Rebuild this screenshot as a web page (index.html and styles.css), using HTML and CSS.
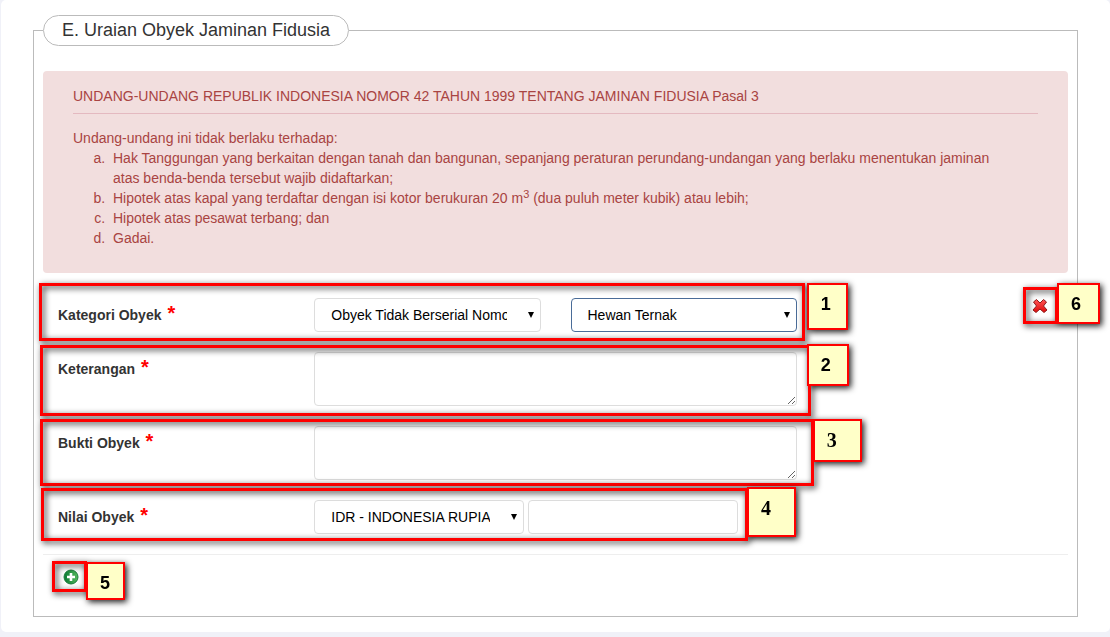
FILE: index.html
```
<!DOCTYPE html>
<html lang="id">
<head>
    <meta charset="UTF-8">
    <meta name="viewport" content="width=device-width, initial-scale=1.0">
    <title>Uraian Obyek Jaminan Fidusia</title>
    <link rel="stylesheet" href="styles.css">
</head>
<body>
    <form class="panel">
        <fieldset class="section">
            <legend>E. Uraian Obyek Jaminan Fidusia</legend>

            <div class="alert">
                <p class="alert-title">UNDANG-UNDANG REPUBLIK INDONESIA NOMOR 42 TAHUN 1999 TENTANG JAMINAN FIDUSIA Pasal 3</p>
                <p>Undang-undang ini tidak berlaku terhadap:</p>
                <ol>
                    <li>Hak Tanggungan yang berkaitan dengan tanah dan bangunan, sepanjang peraturan perundang-undangan yang berlaku menentukan jaminan atas benda-benda tersebut wajib didaftarkan;</li>
                    <li>Hipotek atas kapal yang terdaftar dengan isi kotor berukuran 20 m<sup>3</sup> (dua puluh meter kubik) atau lebih;</li>
                    <li>Hipotek atas pesawat terbang; dan</li>
                    <li>Gadai.</li>
                </ol>
            </div>

            <div class="rows">
                <div class="row">
                    <div class="fields">
                        <label for="kategori">Kategori Obyek <span class="req">*</span></label>
                        <div class="control">
                            <span class="select">
                                <select id="kategori">
                                    <option>Obyek Tidak Berserial Nomor</option>
                                </select>
                            </span>
                        </div>
                        <div class="control">
                            <span class="select active">
                                <select id="jenis" aria-label="Jenis Obyek">
                                    <option>Hewan Ternak</option>
                                </select>
                            </span>
                        </div>
                        <div class="frame frame-1"><span class="note">1</span></div>
                    </div>
                    <div class="remove">
                        <button type="button" class="icon-button" aria-label="Hapus">
                            <svg width="16" height="16" viewBox="0 0 16 16">
                                <defs>
                                    <linearGradient id="red" x1="0" y1="0" x2="0" y2="1">
                                        <stop offset="0" stop-color="#f55"/>
                                        <stop offset="1" stop-color="#e00a0a"/>
                                    </linearGradient>
                                </defs>
                                <path d="M4.500 1.500 8 5l3.500-3.500 3 2.500L11.500 8l3.500 4-3 2.500L8 11l-4 3.500L1 12l3.500-4L1.500 4z" fill="url(#red)" stroke="#8f1a1a" stroke-linejoin="round"/>
                            </svg>
                        </button>
                        <div class="frame frame-6"><span class="note">6</span></div>
                    </div>
                </div>

                <div class="row">
                    <div class="fields">
                        <label for="keterangan">Keterangan <span class="req">*</span></label>
                        <div class="control wide"><textarea id="keterangan"></textarea></div>
                        <div class="frame frame-2"><span class="note">2</span></div>
                    </div>
                </div>

                <div class="row">
                    <div class="fields">
                        <label for="bukti">Bukti Obyek <span class="req">*</span></label>
                        <div class="control wide"><textarea id="bukti"></textarea></div>
                        <div class="frame frame-3"><span class="note serif">3</span></div>
                    </div>
                </div>

                <div class="row">
                    <div class="fields">
                        <label for="nilai">Nilai Obyek <span class="req">*</span></label>
                        <div class="control wide money">
                            <span class="select">
                                <select id="mata-uang" aria-label="Mata Uang">
                                    <option>IDR - INDONESIA RUPIAH</option>
                                </select>
                            </span>
                            <input type="text" id="nilai">
                        </div>
                        <div class="frame frame-4"><span class="note serif">4</span></div>
                    </div>
                </div>
            </div>

            <div class="add">
                <button type="button" class="icon-button" aria-label="Tambah">
                    <svg width="16" height="16" viewBox="0 0 16 16">
                        <defs>
                            <linearGradient id="green" x1="0" y1="0" x2="1" y2="0">
                                <stop offset="0" stop-color="#087a32"/>
                                <stop offset="1" stop-color="#55b85c"/>
                            </linearGradient>
                        </defs>
                        <circle cx="8" cy="8" r="7" fill="url(#green)" stroke="#1d7c3c"/>
                        <path d="M8 4v8M4 8h8" stroke="#fff" stroke-width="2.600"/>
                    </svg>
                </button>
                <div class="frame frame-5"><span class="note">5</span></div>
            </div>
        </fieldset>
    </form>
</body>
</html>
```
FILE: styles.css
```
* {
    box-sizing: border-box;
}
body {
    margin: 0;
    background: #f0f1f8;
    color: #333;
    font: 14px/20px "Liberation Sans", Arial, sans-serif;
}
.panel {
    margin: 0 0 5px 1px;
    padding: 15px 32px;
    background: #fff;
    border-radius: 5px;
}
.section {
    min-width: 0;
    margin: 0;
    padding: 25px 9px 31px;
    border: 1px solid #bbb;
}
legend {
    padding: 0 18px;
    border: 1px solid #bbb;
    border-radius: 16px;
    font-size: 18px;
    line-height: 29px;
}

.alert {
    padding: 15px 30px 25px;
    background: #f2dede;
    border-radius: 4px;
    color: #a94442;
}
.alert p {
    margin: 0;
}
.alert .alert-title {
    margin-bottom: 14px;
    padding-bottom: 7px;
    border-bottom: 1px solid #e4b9c0;
}
.alert ol {
    margin: 0;
    padding: 0 20px 0 40px;
}
.alert li::marker {
    content: counter(list-item, lower-alpha) ".\00a0\00a0";
}
.alert sup {
    position: relative;
    top: -5px;
    font-size: 11px;
    line-height: 0;
    vertical-align: baseline;
}

.rows {
    display: flex;
    flex-direction: column;
    gap: 20px;
    padding: 25px 0 20px;
    border-bottom: 1px solid #eee;
}
.row {
    display: grid;
    grid-template-columns: 3fr 1fr;
}
.fields {
    position: relative;
    display: grid;
    grid-template-columns: repeat(3, 1fr);
}
label {
    padding: 7px 15px 0;
    font-weight: bold;
}
.req {
    margin-left: 2px;
    color: #f00;
    font-size: 20px;
    line-height: 0;
}
.control {
    display: flex;
    padding: 0 15px;
}
.wide {
    grid-column: span 2;
}
.money {
    gap: 4px;
}
.money .select, .money input {
    flex: 0 1 210px;
}
.select {
    position: relative;
    flex: 1;
    min-width: 0;
}
.select::after {
    content: "";
    position: absolute;
    top: 14px;
    right: 7px;
    border: 3px solid transparent;
    border-top: 6px solid #000;
    border-bottom: 0;
    pointer-events: none;
}
select, input, textarea {
    width: 100%;
    min-width: 0;
    height: 34px;
    border: 1px solid #ddd;
    border-radius: 4px;
    background: #fff;
    color: #000;
    font: inherit;
}
select {
    appearance: none;
    padding: 0 33px 0 16px;
}
.active select {
    border-color: #4a6c98;
}
textarea {
    display: block;
    height: 54px;
    resize: vertical;
}

.remove {
    position: relative;
    justify-self: end;
    align-self: start;
    margin-right: 20px;
}
.add {
    position: relative;
    width: 16px;
    margin: 14px 0 0 20px;
}
.icon-button {
    display: block;
    padding: 0;
    border: 0;
    background: none;
    cursor: pointer;
}
.icon-button svg {
    display: block;
}

/* numbered frames over the form */
.frame {
    position: absolute;
    border: 3px solid #f00;
    filter: drop-shadow(2px 2px 3px rgba(0, 0, 0, 0.9));
    pointer-events: none;
}
.frame-1 {
    inset: -15px 7px -9px -4px;
}
.frame-2 {
    inset: -7px 1px -10px -3px;
}
.frame-3 {
    inset: -7px -2px -6px -3px;
}
.frame-4 {
    inset: -12px auto -7px -2px;
    width: 707px;
}
.frame-5 {
    inset: -8px -8px -7px -11px;
}
.frame-6 {
    inset: -11px -10px -10px -9px;
}
.note {
    position: absolute;
    top: -3px;
    left: 100%;
    width: 43px;
    height: 42px;
    padding-left: 12px;
    border: 2px solid #f00;
    background: #ffffc8;
    color: #000;
    font-size: 18px;
    font-weight: bold;
    line-height: 38px;
}
.serif {
    font-family: "Liberation Serif", "Times New Roman", serif;
    font-size: 20px;
}
.frame-1 .note {
    left: calc(100% + 5px);
    width: 41px;
    height: 47px;
}
.frame-2 .note {
    top: -4px;
    left: calc(100% - 1px);
    width: 42px;
}
.frame-3 .note, .frame-4 .note {
    left: calc(100% + 2px);
    width: 49px;
}
.frame-3 .note {
    height: 43px;
}
.frame-4 .note {
    top: -4px;
    height: 50px;
}
.frame-5 .note {
    top: -2px;
    left: calc(100% + 2px);
    width: 39px;
    height: 38px;
}
.frame-6 .note {
    top: -7px;
    left: calc(100% + 2px);
    height: 41px;
}
```
